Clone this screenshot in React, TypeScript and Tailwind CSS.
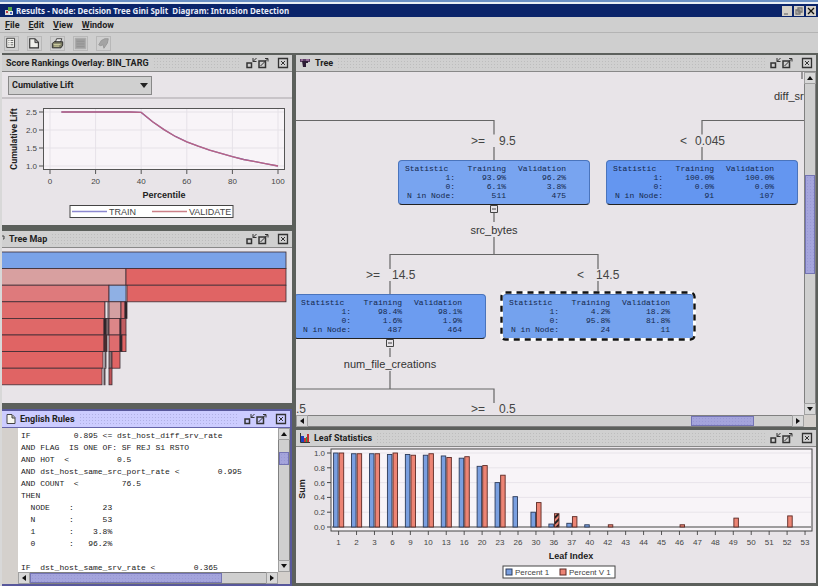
import { ReactNode, useState } from "react";
import clsx from "clsx";

/* ---------- data ---------- */

const MENUS = ["File", "Edit", "View", "Window"];

const LIFT: [number, number][] = [
  [5, 2.5], [35, 2.5], [40, 2.49], [45, 2.23], [50, 2.01], [55, 1.82], [60, 1.67],
  [65, 1.55], [70, 1.44], [75, 1.35], [80, 1.26], [85, 1.18], [90, 1.12], [95, 1.06], [100, 1],
];

type Leaf = { leaf: number; train?: number; valid?: number; hatched?: boolean };

const LEAVES: Leaf[] = [
  { leaf: 1, train: 1, valid: 1 },
  { leaf: 2, train: 0.99, valid: 0.99 },
  { leaf: 3, train: 0.99, valid: 0.99 },
  { leaf: 6, train: 0.98, valid: 1 },
  { leaf: 9, train: 0.98, valid: 0.97 },
  { leaf: 10, train: 0.97, valid: 0.99 },
  { leaf: 13, train: 0.96, valid: 0.94 },
  { leaf: 16, train: 0.93, valid: 0.95 },
  { leaf: 20, train: 0.82, valid: 0.83 },
  { leaf: 23, train: 0.6, valid: 0.7 },
  { leaf: 26, train: 0.41 },
  { leaf: 30, train: 0.2, valid: 0.33 },
  { leaf: 36, train: 0.04, valid: 0.18, hatched: true },
  { leaf: 37, train: 0.05, valid: 0.14 },
  { leaf: 40, train: 0.03 },
  { leaf: 42, valid: 0.03 },
  { leaf: 43 },
  { leaf: 44 },
  { leaf: 45 },
  { leaf: 46, valid: 0.03 },
  { leaf: 47 },
  { leaf: 48 },
  { leaf: 49, valid: 0.12 },
  { leaf: 50 },
  { leaf: 51 },
  { leaf: 52, valid: 0.15 },
  { leaf: 53 },
];

// One entry per rectangle: level, left, right, fill.
const TREE_MAP: [number, number, number, string][] = [
  [0, -2, 284, "#7aa2e8"],
  [1, -2, 124, "#d8a0a0"],
  [1, 124, 284, "#e06464"],
  [2, -2, 107, "#de7a7c"],
  [2, 107, 124, "#8fb0e4"],
  [2, 125, 284, "#e06464"],
  [3, -2, 103, "#df6c6c"],
  [3, 103, 106, "#e8e4e8"],
  [3, 107, 119, "#d4a0a2"],
  [3, 119, 123, "#d87074"],
  [3, 123, 125, "#222222"],
  [4, -2, 102, "#df6868"],
  [4, 102, 104, "#222222"],
  [4, 104, 107, "#77676a"],
  [4, 107, 118, "#dc8688"],
  [4, 118, 119, "#222222"],
  [4, 119, 124, "#c05c60"],
  [5, -2, 102, "#e06464"],
  [5, 102, 105, "#4a2c2e"],
  [5, 107, 118, "#de6c6e"],
  [5, 118, 120, "#222222"],
  [5, 120, 124, "#e06464"],
  [6, -2, 101, "#e06464"],
  [6, 103, 104, "#888888"],
  [6, 107, 110, "#8a7476"],
  [6, 110, 118, "#e06464"],
  [7, -2, 100, "#e06464"],
  [7, 102, 103, "#888888"],
  [7, 107, 110, "#c05458"],
];

const RULES = `IF         0.895 <= dst_host_diff_srv_rate
AND FLAG  IS ONE OF: SF REJ S1 RSTO
AND HOT  <          0.5
AND dst_host_same_src_port_rate <        0.995
AND COUNT  <         76.5
THEN
  NODE    :      23
  N       :      53
  1       :    3.8%
  0       :   96.2%

IF  dst_host_same_srv_rate <        0.365`;

/* ---------- window chrome ---------- */

function FrameButton({ label, children }: { label: string; children: ReactNode }) {
  return (
    <button aria-label={label} className="flex h-3 w-3 shrink-0 items-center justify-center text-[#333333]">
      <svg viewBox="0 0 12 12" className="h-3 w-3" fill="none" stroke="currentColor">
        {children}
      </svg>
    </button>
  );
}

function Panel({
  title,
  icon,
  active,
  className,
  children,
}: {
  title: string;
  icon?: ReactNode;
  active?: boolean;
  className?: string;
  children: ReactNode;
}) {
  return (
    <section className={clsx("flex min-w-0 flex-col bg-[#e8e4e8]", className)}>
      <header
        className={clsx(
          "flex h-[17px] shrink-0 items-center border-b pl-1 pr-[3px]",
          active ? "border-[#6464a8] bg-[#ccccff]" : "border-[#888888] bg-[#d0d0d0]"
        )}
      >
        {icon}
        <h2 className="whitespace-nowrap font-['Roboto',sans-serif] text-[9px] font-bold leading-4 text-[#222222]">
          {title}
        </h2>
        <span
          className={clsx(
            "mx-1 h-3 flex-1 bg-[length:3px_3px]",
            active
              ? "bg-[radial-gradient(#b0b0e4_1px,transparent_1px)]"
              : "bg-[radial-gradient(#bdbdbd_1px,transparent_1px)]"
          )}
        />
        <FrameButton label={`Minimize ${title}`}>
          <path d="M2 6h4.500v4.500h-4.500z" strokeWidth="1.500" />
          <path d="M8 1v3.500h3.500M8 4.500l3.500-3.500" />
        </FrameButton>
        <FrameButton label={`Maximize ${title}`}>
          <path d="M2 4h6.500v6.500h-6.500z" strokeWidth="1.500" />
          <path d="M3.500 9l7-7M8 1.500h3v3" />
        </FrameButton>
        <span className="w-2 shrink-0" />
        <FrameButton label={`Close ${title}`}>
          <path d="M1.500 1.500h9v9h-9z" strokeWidth="1.300" />
          <path d="M4 4l4 4M8 4l-4 4" />
        </FrameButton>
      </header>
      {children}
    </section>
  );
}

const ARROWS = {
  up: "M1 6l3-4 3 4z",
  down: "M1 2l3 4 3-4z",
  left: "M6 1l-4 3 4 3z",
  right: "M2 1l4 3-4 3z",
};

function ScrollArrow({ dir }: { dir: keyof typeof ARROWS }) {
  return (
    <button
      aria-label={`Scroll ${dir}`}
      className="flex h-3 w-3 shrink-0 items-center justify-center border border-[#a0a0a0] bg-[#d8d8d8]"
    >
      <svg viewBox="0 0 8 8" className="h-2 w-2">
        <path d={ARROWS[dir]} fill="#111111" />
      </svg>
    </button>
  );
}

function ScrollBar({
  vertical,
  before,
  size,
  after,
}: {
  vertical?: boolean;
  before: number;
  size: number;
  after: number;
}) {
  return (
    <div className={clsx("flex shrink-0 bg-[#cfcfcf]", vertical ? "w-3 flex-col" : "h-3 min-w-0 flex-1")}>
      <ScrollArrow dir={vertical ? "up" : "left"} />
      <div
        className={clsx(
          "flex min-h-0 min-w-0 flex-1 border-[#808080]",
          vertical ? "flex-col border-x" : "border-y"
        )}
      >
        <span style={{ flexGrow: before }} />
        <span
          className="border border-[#7474b4] bg-[#a4a4dc] bg-[radial-gradient(#9898d4_1px,transparent_1px)] bg-[length:3px_3px]"
          style={{ flexGrow: size }}
        />
        <span style={{ flexGrow: after }} />
      </div>
      <ScrollArrow dir={vertical ? "down" : "right"} />
    </div>
  );
}

/* ---------- toolbar icons ---------- */

const TOOLS: { label: string; disabled?: boolean; art: ReactNode }[] = [
  {
    label: "Table",
    art: (
      <>
        <path d="M2 1.500h9v10.500H2z" fill="#f4f4f0" stroke="#333" />
        <path d="M4 4h1M4 6.500h1M4 9h1M6.500 4h3M6.500 6.500h3M6.500 9h3" stroke="#555" />
      </>
    ),
  },
  {
    label: "New",
    art: (
      <>
        <path d="M2 2h6l4 4v6.500h-10z" fill="#f0f0ec" stroke="#333" strokeWidth="1.300" />
        <path d="M8 2.500v4h4" fill="#999" stroke="#333" />
      </>
    ),
  },
  {
    label: "Print",
    art: (
      <>
        <path d="M5 6l1.500-4h6l-1.500 4z" fill="#eee" stroke="#333" />
        <path d="M1.500 7.500l2-2h10v4l-2 3H1.500z" fill="#7c7c64" stroke="#222" />
        <path d="M3 8.500h8M3.500 10.500h6" stroke="#e4e4b0" />
      </>
    ),
  },
  {
    label: "Save",
    disabled: true,
    art: (
      <>
        <path d="M1.500 1.500h12v12h-12z" fill="#a0a0a0" stroke="#aaa" />
        <path d="M3 5h9M3 8h9M3 11h9" stroke="#929292" />
      </>
    ),
  },
  {
    label: "Run",
    disabled: true,
    art: <path d="M2 9l3-5 4-2 4 0-1 5-4 6-1-4-3 1z" fill="#a4a4a4" stroke="#949494" />,
  },
];

/* ---------- charts ---------- */

const liftX = (p: number) => 48 + p * 2.28;
const liftY = (v: number) => 13 + (2.5 - v) * 36;

function LiftChart() {
  const line = LIFT.map(([p, v]) => `${liftX(p)},${liftY(v)}`).join(" ");
  return (
    <svg viewBox="0 0 290 126" className="w-full text-[8px]" fill="#444444">
      <rect x="41.500" y="9.500" width="241" height="61" fill="#f8f4f8" stroke="#555555" />
      {[2.5, 2, 1.5, 1].map((v) => (
        <g key={v}>
          <path d={`M42 ${liftY(v)}h240`} stroke="#e6e2e8" />
          <path d={`M37 ${liftY(v)}h4`} stroke="#555555" />
          <text x="35" y={liftY(v) + 3} textAnchor="end">{v.toFixed(1)}</text>
        </g>
      ))}
      {[0, 20, 40, 60, 80, 100].map((p) => (
        <g key={p}>
          <path d={`M${liftX(p)} 10v60`} stroke="#e6e2e8" />
          <path d={`M${liftX(p)} 71v4`} stroke="#555555" />
          <text x={liftX(p)} y="85" textAnchor="middle">{p}</text>
        </g>
      ))}
      <polyline points={line} fill="none" stroke="#6a5cb0" strokeWidth="1.400" />
      <polyline points={line} fill="none" stroke="#cc6478" strokeOpacity="0.8" strokeWidth="1.300" />
      <text x="162" y="99" textAnchor="middle" className="text-[9px] font-bold" fill="#222222">Percentile</text>
      <text x="15" y="40" textAnchor="middle" transform="rotate(-90 15 40)" className="font-['Roboto',sans-serif] text-[9px] font-bold" fill="#222222">
        Cumulative Lift
      </text>
      <rect x="68" y="106.500" width="163" height="12" fill="#ffffff" stroke="#444444" />
      <path d="M70 112.500h35" stroke="#8c88d0" strokeWidth="1.400" />
      <text x="107" y="116" className="text-[9px]">TRAIN</text>
      <path d="M150 112.500h35" stroke="#cc8088" strokeWidth="1.400" />
      <text x="187" y="116" className="text-[9px]">VALIDATE</text>
    </svg>
  );
}

function TreeMapChart() {
  return (
    <svg viewBox="0 0 290 155" className="w-full">
      {TREE_MAP.map(([level, left, right, fill], i) => (
        <rect
          key={i}
          x={left}
          y={4 + level * 16.6}
          width={right - left}
          height="16.6"
          fill={fill}
          stroke="#3c2c34"
          strokeWidth="0.8"
        />
      ))}
    </svg>
  );
}

const leafY = (v: number) => 80 - v * 74;

function LeafChart() {
  return (
    <svg viewBox="0 0 520 136" className="w-full text-[8px]" fill="#444444">
      <defs>
        <pattern id="hatch" width="4" height="4" patternUnits="userSpaceOnUse" patternTransform="rotate(45)">
          <rect width="4" height="4" fill="#ec8474" />
          <rect width="2" height="4" fill="#222222" />
        </pattern>
      </defs>
      <rect x="35" y="2" width="481" height="82" fill="#f8f4f8" stroke="#444444" />
      {[1, 0.8, 0.6, 0.4, 0.2, 0].map((v) => (
        <g key={v}>
          <path d={`M36 ${leafY(v)}h479`} stroke={v === 0 ? "#444444" : "#e8e4ea"} />
          <path d={`M31 ${leafY(v)}h4`} stroke="#444444" />
          <text x="29" y={leafY(v) + 3} textAnchor="end">{v.toFixed(1)}</text>
        </g>
      ))}
      {LEAVES.map(({ leaf, train, valid, hatched }, i) => {
        const x = 42.6 + i * 17.94;
        return (
          <g key={leaf} strokeWidth="0.9">
            {train && (
              <rect x={x - 5} y={leafY(train)} width="4.500" height={80 - leafY(train)} fill="#7a9fe0" stroke="#2c3a58" />
            )}
            {valid && (
              <rect
                x={x + 0.6}
                y={leafY(valid)}
                width="4.500"
                height={80 - leafY(valid)}
                fill={hatched ? "url(#hatch)" : "#ec8474"}
                stroke="#5c2824"
              />
            )}
            <path d={`M${x} 84v4`} stroke="#444444" />
            <text x={x} y="98" textAnchor="middle">{leaf}</text>
          </g>
        );
      })}
      <text x="275" y="112" textAnchor="middle" className="text-[9px] font-bold" fill="#222222">Leaf Index</text>
      <text x="9" y="42" textAnchor="middle" transform="rotate(-90 9 42)" className="text-[9px] font-bold" fill="#222222">
        Sum
      </text>
      <rect x="207" y="119" width="112" height="12" fill="#ffffff" stroke="#444444" />
      <rect x="210" y="122" width="6" height="6" fill="#7a9fe0" stroke="#2c3a58" />
      <text x="219" y="128">Percent 1</text>
      <rect x="264" y="122" width="6" height="6" fill="#ec8474" stroke="#5c2824" />
      <text x="273" y="128">Percent V 1</text>
    </svg>
  );
}

/* ---------- decision tree ---------- */

type NodeStats = {
  position: string;
  fill: string;
  one: [string, string];
  zero: [string, string];
  count: [string, string];
  selected?: boolean;
};

const NODES: NodeStats[] = [
  { position: "left-[102px] top-[88px]", fill: "bg-[#78a4f0]", one: ["93.9%", "96.2%"], zero: ["6.1%", "3.8%"], count: ["511", "475"] },
  { position: "left-[310px] top-[88px]", fill: "bg-[#6496f0]", one: ["100.0%", "100.0%"], zero: ["0.0%", "0.0%"], count: ["91", "107"] },
  { position: "left-[-2px] top-[222px]", fill: "bg-[#6c9cf0]", one: ["98.4%", "98.1%"], zero: ["1.6%", "1.9%"], count: ["487", "464"] },
  { position: "left-[206px] top-[222px]", fill: "bg-[#74a2ee]", one: ["4.2%", "18.2%"], zero: ["95.8%", "81.8%"], count: ["24", "11"], selected: true },
];

function TreeNode({ position, fill, one, zero, count, selected }: NodeStats) {
  const rows: [string, [string, string]][] = [["1:", one], ["0:", zero], ["N in Node:", count]];
  return (
    <div
      className={clsx(
        "absolute h-[45px] w-48 rounded-sm border border-[#4a74bc] border-b-[#222222] px-[6px] pt-[3px]",
        position,
        fill
      )}
    >
      <table className="table-fixed border-collapse font-['Liberation_Mono',monospace] text-[8px] leading-[9px] text-[#14284c]">
        <thead>
          <tr>
            <th className="w-[50px] p-0 text-left font-normal">Statistic</th>
            <th className="w-[51px] p-0 text-right font-normal">Training</th>
            <th className="w-[60px] p-0 text-right font-normal">Validation</th>
          </tr>
        </thead>
        <tbody>
          {rows.map(([name, [training, validation]]) => (
            <tr key={name}>
              <th className="whitespace-nowrap p-0 text-right font-normal">{name}</th>
              <td className="p-0 text-right">{training}</td>
              <td className="p-0 text-right">{validation}</td>
            </tr>
          ))}
        </tbody>
      </table>
      {selected && (
        <svg viewBox="0 0 196 50" className="absolute -left-[3px] -top-[4px] h-[50px] w-[196px]" fill="none" strokeWidth="3">
          <rect x="1.500" y="1.500" width="193" height="47" rx="4" stroke="#fcfcfc" />
          <rect x="1.500" y="1.500" width="193" height="47" rx="4" stroke="#111111" strokeWidth="2.400" strokeDasharray="6 5" />
        </svg>
      )}
    </div>
  );
}

function TreeDiagram() {
  return (
    <div className="relative min-h-[341px] min-w-0 flex-1 overflow-hidden">
      <svg className="absolute left-0 top-0 h-full w-full font-['Liberation_Sans',sans-serif]" fill="#444444">
        <g fill="none" stroke="#666666" strokeWidth="1.200">
          <path d="M0 48.500h198v14M198 75v13M198 141v9M198 165v17" />
          <path d="M508 48.500h-102v14M406 75v13M506 0v7" />
          <path d="M94 197v-14.500h208v14.500M94 209v13M302 209v13" />
          <path d="M94 276v9M94 299v18M0 317h198v14" />
        </g>
        <g fill="#e8e4e8" stroke="#444444">
          <path d="M194.500 133.500h7v7h-7zM90.500 267.500h7v7h-7z" />
          <path d="M196 137h4M92 271h4" />
        </g>
        <g className="text-[12px]">
          <text x="175" y="73">&gt;=</text>
          <text x="203" y="73">9.5</text>
          <text x="384" y="73">&lt;</text>
          <text x="399" y="73">0.045</text>
          <text x="70" y="207">&gt;=</text>
          <text x="96" y="207">14.5</text>
          <text x="281" y="207">&lt;</text>
          <text x="300" y="207">14.5</text>
          <text x="175" y="341">&gt;=</text>
          <text x="203" y="341">0.5</text>
          <text x="0" y="341">.5</text>
        </g>
        <g className="text-[11px]" fill="#333333">
          <text x="478" y="28">diff_srv_rate</text>
          <text x="198" y="162" textAnchor="middle">src_bytes</text>
          <text x="94" y="296" textAnchor="middle">num_file_creations</text>
        </g>
      </svg>
      {NODES.map((node) => (
        <TreeNode key={node.position} {...node} />
      ))}
    </div>
  );
}

/* ---------- page ---------- */

export default function App() {
  const [measure, setMeasure] = useState("Cumulative Lift");

  return (
    <div className="flex min-h-screen flex-col bg-[#cfcfcf] font-['Liberation_Sans',sans-serif]">
      <div className="h-1 border-b-2 border-[#e8eef4] bg-[#6a8fc4]" />
      <div className="flex h-[13px] items-center gap-[2px] bg-[#0a246a] pl-1 pr-[2px]">
        <svg viewBox="0 0 10 10" className="h-[10px] w-[10px] shrink-0">
          <path d="M1 4h4v5H1z" fill="#d8d8d8" />
          <path d="M4 1h4v4H4z" fill="#58a848" />
          <path d="M5 5h4v4H5z" fill="#e8e8e8" />
          <path d="M2 5h2v2H2z" fill="#c04040" />
          <path d="M6 6h2v2H6z" fill="#4868c0" />
        </svg>
        <h1 className="flex-1 whitespace-pre font-['Noto_Sans',sans-serif] text-[8px] font-bold leading-3 text-[#e8ecf8]">
          {"Results - Node: Decision Tree Gini Split  Diagram: Intrusion Detection"}
        </h1>
        {[
          { label: "Minimize", d: "M2 8h4" },
          { label: "Restore", d: "M4 2h4v4h-4zM2 4h4v4h-4z" },
          { label: "Close", d: "M2 2l6 6M8 2l-6 6" },
        ].map(({ label, d }) => (
          <button key={label} aria-label={label} className="h-[10px] w-[10px] bg-[#d4d0c8]">
            <svg viewBox="0 0 10 10" className="h-[10px] w-[10px]" fill="none" stroke={label === "Close" ? "#111111" : "#777777"}>
              <path d={d} strokeWidth="1.300" />
            </svg>
          </button>
        ))}
      </div>

      <nav className="flex h-4 items-center gap-[9px] border-b border-[#b4b4b4] pl-[5px]">
        {MENUS.map((m) => (
          <button key={m} className="font-['Roboto',sans-serif] text-[9px] font-bold leading-3 text-[#222222]">
            <span className="underline">{m[0]}</span>
            {m.slice(1)}
          </button>
        ))}
      </nav>

      <div className="flex h-5 items-center gap-2 pl-1">
        {TOOLS.map(({ label, disabled, art }) => (
          <button
            key={label}
            aria-label={label}
            disabled={disabled}
            className="flex h-[15px] w-[15px] items-center justify-center border border-[#b8b8b8]"
          >
            <svg viewBox="0 0 15 15" className="h-[13px] w-[13px]" fill="none">
              {art}
            </svg>
          </button>
        ))}
      </div>

      <main className="grid flex-1 grid-cols-[290fr_520fr] gap-1 border-l-2 border-[#d8d8d8] bg-[#5c605c] pr-[2px] pt-[2px]">
        <div className="flex min-w-0 flex-col gap-[6px]">
          <Panel title="Score Rankings Overlay: BIN_TARG">
            <div className="border-b-2 border-[#c8c4c8] px-[6px] pb-[2px] pt-1">
              <div className="relative w-36">
                <select
                  aria-label="Measure"
                  value={measure}
                  onChange={(e) => setMeasure(e.target.value)}
                  className="block h-[19px] w-full appearance-none border border-[#888888] bg-[#d0d0d0] px-[3px] font-['Roboto',sans-serif] text-[9px] font-bold text-[#222222]"
                >
                  <option>Cumulative Lift</option>
                  <option>Lift</option>
                  <option>Gain</option>
                </select>
                <svg viewBox="0 0 8 5" className="pointer-events-none absolute right-1 top-[7px] h-[5px] w-2">
                  <path d="M0 0h8l-4 5z" fill="#222222" />
                </svg>
              </div>
            </div>
            <LiftChart />
          </Panel>

          <Panel
            title="Tree Map"
            className="flex-1"
            icon={
              <svg viewBox="0 0 3 10" className="-ml-1 mr-1 h-[10px] w-[3px]">
                <path d="M0 2h2v3h-1" fill="none" stroke="#444444" />
              </svg>
            }
          >
            <TreeMapChart />
          </Panel>

          <div className="bg-[#58589c] pb-[2px] pr-[2px] pt-[2px]">
            <Panel
              title="English Rules"
              active
              icon={
                <svg viewBox="0 0 10 12" className="mr-1 h-3 w-[10px]">
                  <path d="M1 1.500h5l3 3v6H1z" fill="#f8f8f0" stroke="#444444" />
                  <path d="M6 2v3h3" fill="#bbbbbb" stroke="#444444" />
                </svg>
              }
            >
              <div className="flex bg-white">
                <div className="w-4 shrink-0 bg-[#d4d0cc]" />
                <pre className="h-36 min-w-0 flex-1 overflow-hidden pl-[3px] pt-[2px] font-['Liberation_Mono',monospace] text-[8px] leading-3 text-[#222222]">
                  {RULES}
                </pre>
                <ScrollBar vertical before={12} size={11} after={96} />
              </div>
              <div className="flex bg-[#d4d0cc] pl-4 pr-3">
                <ScrollBar before={0} size={192} after={44} />
              </div>
            </Panel>
          </div>
        </div>

        <div className="flex min-w-0 flex-col gap-[3px] pb-[3px]">
          <Panel
            title="Tree"
            className="flex-1"
            icon={
              <svg viewBox="0 0 11 10" className="mr-1 h-[10px] w-[11px]">
                <path d="M0 1h10v3H0z" fill="#5c3c64" />
                <path d="M2 3h6v2H6v4H3z" fill="#2c1c34" />
                <path d="M1 2h2M6 2h3" stroke="#c8a0c8" />
              </svg>
            }
          >
            <div className="flex min-h-0 flex-1">
              <TreeDiagram />
              <ScrollBar vertical before={92} size={97} after={130} />
            </div>
            <div className="flex bg-[#d4d0cc] pr-3">
              <ScrollBar before={385} size={62} after={38} />
            </div>
          </Panel>

          <Panel
            title="Leaf Statistics"
            icon={
              <svg viewBox="0 0 10 10" className="mr-1 h-[10px] w-[10px]">
                <path d="M0.500 0v9.500h9.500" fill="none" stroke="#333333" />
                <path d="M1 3h3v6H1z" fill="#2040c0" />
                <path d="M4 5h2v4H4z" fill="#d03030" />
                <path d="M6 4h1v5H6z" fill="#30a040" />
                <path d="M7 1h2v8H7z" fill="#c03030" />
              </svg>
            }
          >
            <LeafChart />
          </Panel>
        </div>
      </main>
    </div>
  );
}
